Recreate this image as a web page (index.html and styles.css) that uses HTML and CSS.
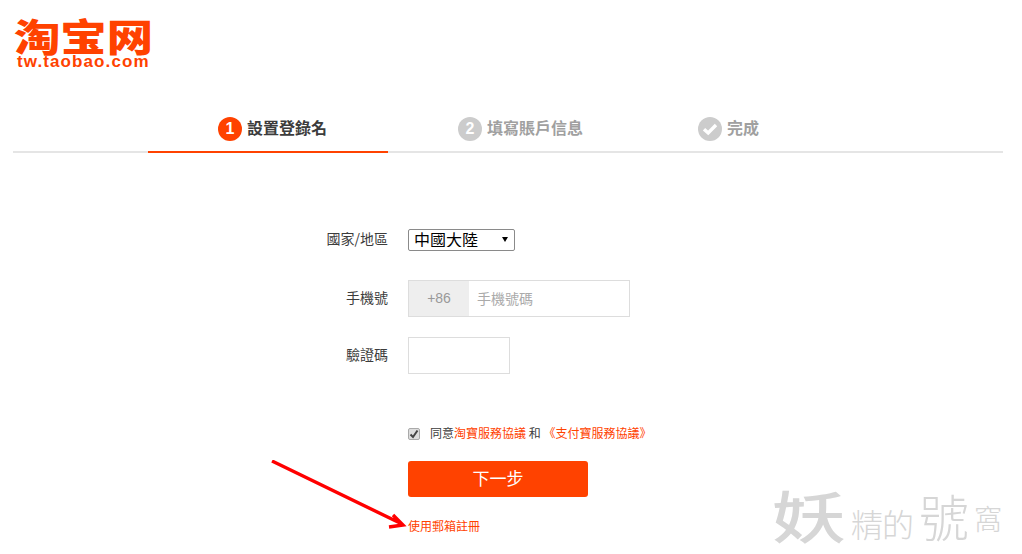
FILE: index.html
```html
<!DOCTYPE html>
<html lang="zh-Hant">
<head>
<meta charset="utf-8">
<title>淘宝网</title>
<link rel="stylesheet" href="styles.css">
</head>
<body>
<div class="page">
  <header class="logo">
    <div class="logo-cn">淘宝网</div>
    <div class="logo-en">tw.taobao.com</div>
  </header>
  <nav class="steps">
    <div class="step active"><span class="dot">1</span><span class="step-name">設置登錄名</span></div>
    <div class="step"><span class="dot">2</span><span class="step-name">填寫賬戶信息</span></div>
    <div class="step"><span class="dot"><svg width="16" height="14" viewBox="0 0 16 14"><path d="M2 7.2 L6.2 11 L14 3" fill="none" stroke="#fff" stroke-width="3.4"/></svg></span><span class="step-name">完成</span></div>
  </nav>
  <main class="form">
    <div class="row row-country">
      <label class="label">國家/地區</label>
      <span class="select-wrap"><select class="country"><option>中國大陸</option></select></span>
    </div>
    <div class="row row-phone">
      <label class="label">手機號</label>
      <div class="phone"><span class="prefix">+86</span><span class="placeholder">手機號碼</span></div>
    </div>
    <div class="row row-code">
      <label class="label">驗證碼</label>
      <div class="code"></div>
    </div>
    <div class="agree">
      <span class="check"><svg width="10" height="10" viewBox="0 0 10 10"><path d="M1.5 5.5 L4 8 L8.5 1.5" fill="none" stroke="#444" stroke-width="2"/></svg></span>
      <span class="agree-text">同意<a class="link">淘寶服務協議</a> 和 <a class="link">《支付寶服務協議》</a></span>
    </div>
    <button class="next">下一步</button>
    <a class="link email">使用郵箱註冊</a>
  </main>
  <svg class="arrow" width="150" height="80" viewBox="0 0 150 80"><path d="M1 1 L131 64 M122 55 L132 65 L118 67" fill="none" stroke="#f00" stroke-width="3.4"/></svg>
  <div class="mark"><span class="mark-big">妖</span><span class="mark-small">精的</span><span class="mark-mid">號</span><span class="mark-end">窩</span></div>
</div>
</body>
</html>
```
FILE: styles.css
```css
* { box-sizing: border-box; }
html, body { margin: 0; padding: 0; background: #fff; }
body { font-family: "Noto Sans CJK TC", "Liberation Sans", sans-serif; color: #3c3c3c; width: 1022px; height: 554px; overflow: hidden; }
.page { position: relative; height: 554px; padding: 0 19px 0 13px; }
.logo { height: 106px; padding: 16px 0 0 1px; color: #ff4200; }
.logo-cn { width: 114px; font-family: "Noto Sans CJK SC", sans-serif; font-weight: 900; font-size: 38px; line-height: 38px; height: 38px; white-space: nowrap; transform: scaleX(1.22); transform-origin: 0 0; }
.logo-en { font-family: "Liberation Sans", sans-serif; font-weight: bold; font-size: 17px; line-height: 15px; letter-spacing: 1.1px; padding-left: 3px; }
.steps { display: flex; height: 47px; padding-left: 135px; border-bottom: 2px solid #e5e5e5; }
.step { width: 240px; height: 47px; padding: 11px 0 0 70px; display: flex; align-items: flex-start; gap: 5px; color: #a0a0a0; border-bottom: 2px solid transparent; }
.step.active { border-bottom-color: #ff4200; color: #3c3c3c; }
.dot { width: 24px; height: 24px; border-radius: 50%; background: #ccc; color: #fff; display: flex; align-items: center; justify-content: center; font: bold 16px "Liberation Sans", sans-serif; }
.step.active .dot { background: #ff4200; }
.step-name { font-size: 16px; line-height: 20px; font-weight: 700; }
.form { padding-top: 76px; padding-left: 395px; position: relative; }
.row { display: flex; align-items: center; position: relative; }
.label { position: absolute; right: calc(100% - 395px + 395px + 20px); top: 50%; margin-top: -12px; font-size: 14px; line-height: 20px; white-space: nowrap; color: #3c3c3c; }
.row-country { height: 22px; margin-bottom: 29px; }
.select-wrap { position: relative; display: block; width: 107px; height: 22px; }
.select-wrap::after { content: ""; position: absolute; left: 94px; top: 8px; border-style: solid; border-width: 5px 3.5px 0; border-color: #000 transparent transparent; }
.country { display: block; appearance: none; -webkit-appearance: none; width: 107px; height: 22px; font-family: "Noto Sans CJK TC", sans-serif; font-size: 16px; line-height: 18px; padding: 0 0 3px 5px; border: 1px solid #8a8a8a; border-radius: 2px; background: #fff; color: #000; }
.row-phone { height: 37px; margin-bottom: 20px; }
.phone { width: 222px; height: 37px; border: 1px solid #ddd; display: flex; }
.prefix { width: 60px; background: #eee; color: #999; font: 14px/35px "Liberation Sans", sans-serif; text-align: center; }
.placeholder { padding-left: 8px; color: #aaa; font-size: 14px; line-height: 35px; }
.row-code { height: 37px; margin-bottom: 53px; }
.code { width: 102px; height: 37px; border: 1px solid #ddd; }
.agree { display: flex; align-items: center; height: 13px; gap: 10px; margin-bottom: 21px; }
.check { width: 12px; height: 12px; border: 1px solid #aaa; border-radius: 2px; background: #ddd; display: flex; align-items: center; justify-content: center; }
.agree-text { font-size: 12px; line-height: 16px; white-space: nowrap; margin-top: -2px; }
.link { color: #ff4200; text-decoration: none; }
.next { display: block; width: 180px; height: 36px; border: 0; border-radius: 3px; background: #ff4200; color: #fff; font-family: "Noto Sans CJK TC", sans-serif; font-size: 17px; line-height: 34px; padding: 0 0 2px; margin-bottom: 20px; }
.email { display: block; font-size: 12px; line-height: 18px; }
.arrow { position: absolute; left: 271px; top: 460px; }
.mark { position: absolute; left: 772px; top: 486px; height: 56px; display: flex; align-items: center; color: #d6d6d6; font-family: "Noto Sans CJK TC", sans-serif; white-space: nowrap; }
.mark-big { display: block; width: 74px; font-size: 56px; line-height: 56px; font-weight: 500; transform: scaleX(1.32); transform-origin: 0 50%; margin-right: 5px; }
.mark-small { font-size: 32px; line-height: 40px; font-weight: 300; margin-top: 18px; letter-spacing: -1px; margin-right: 6px; }
.mark-mid { font-size: 50px; line-height: 56px; font-weight: 300; margin-top: 2px; }
.mark-end { font-size: 28px; line-height: 40px; font-weight: 300; margin-top: 8px; margin-left: 5px; }
```
